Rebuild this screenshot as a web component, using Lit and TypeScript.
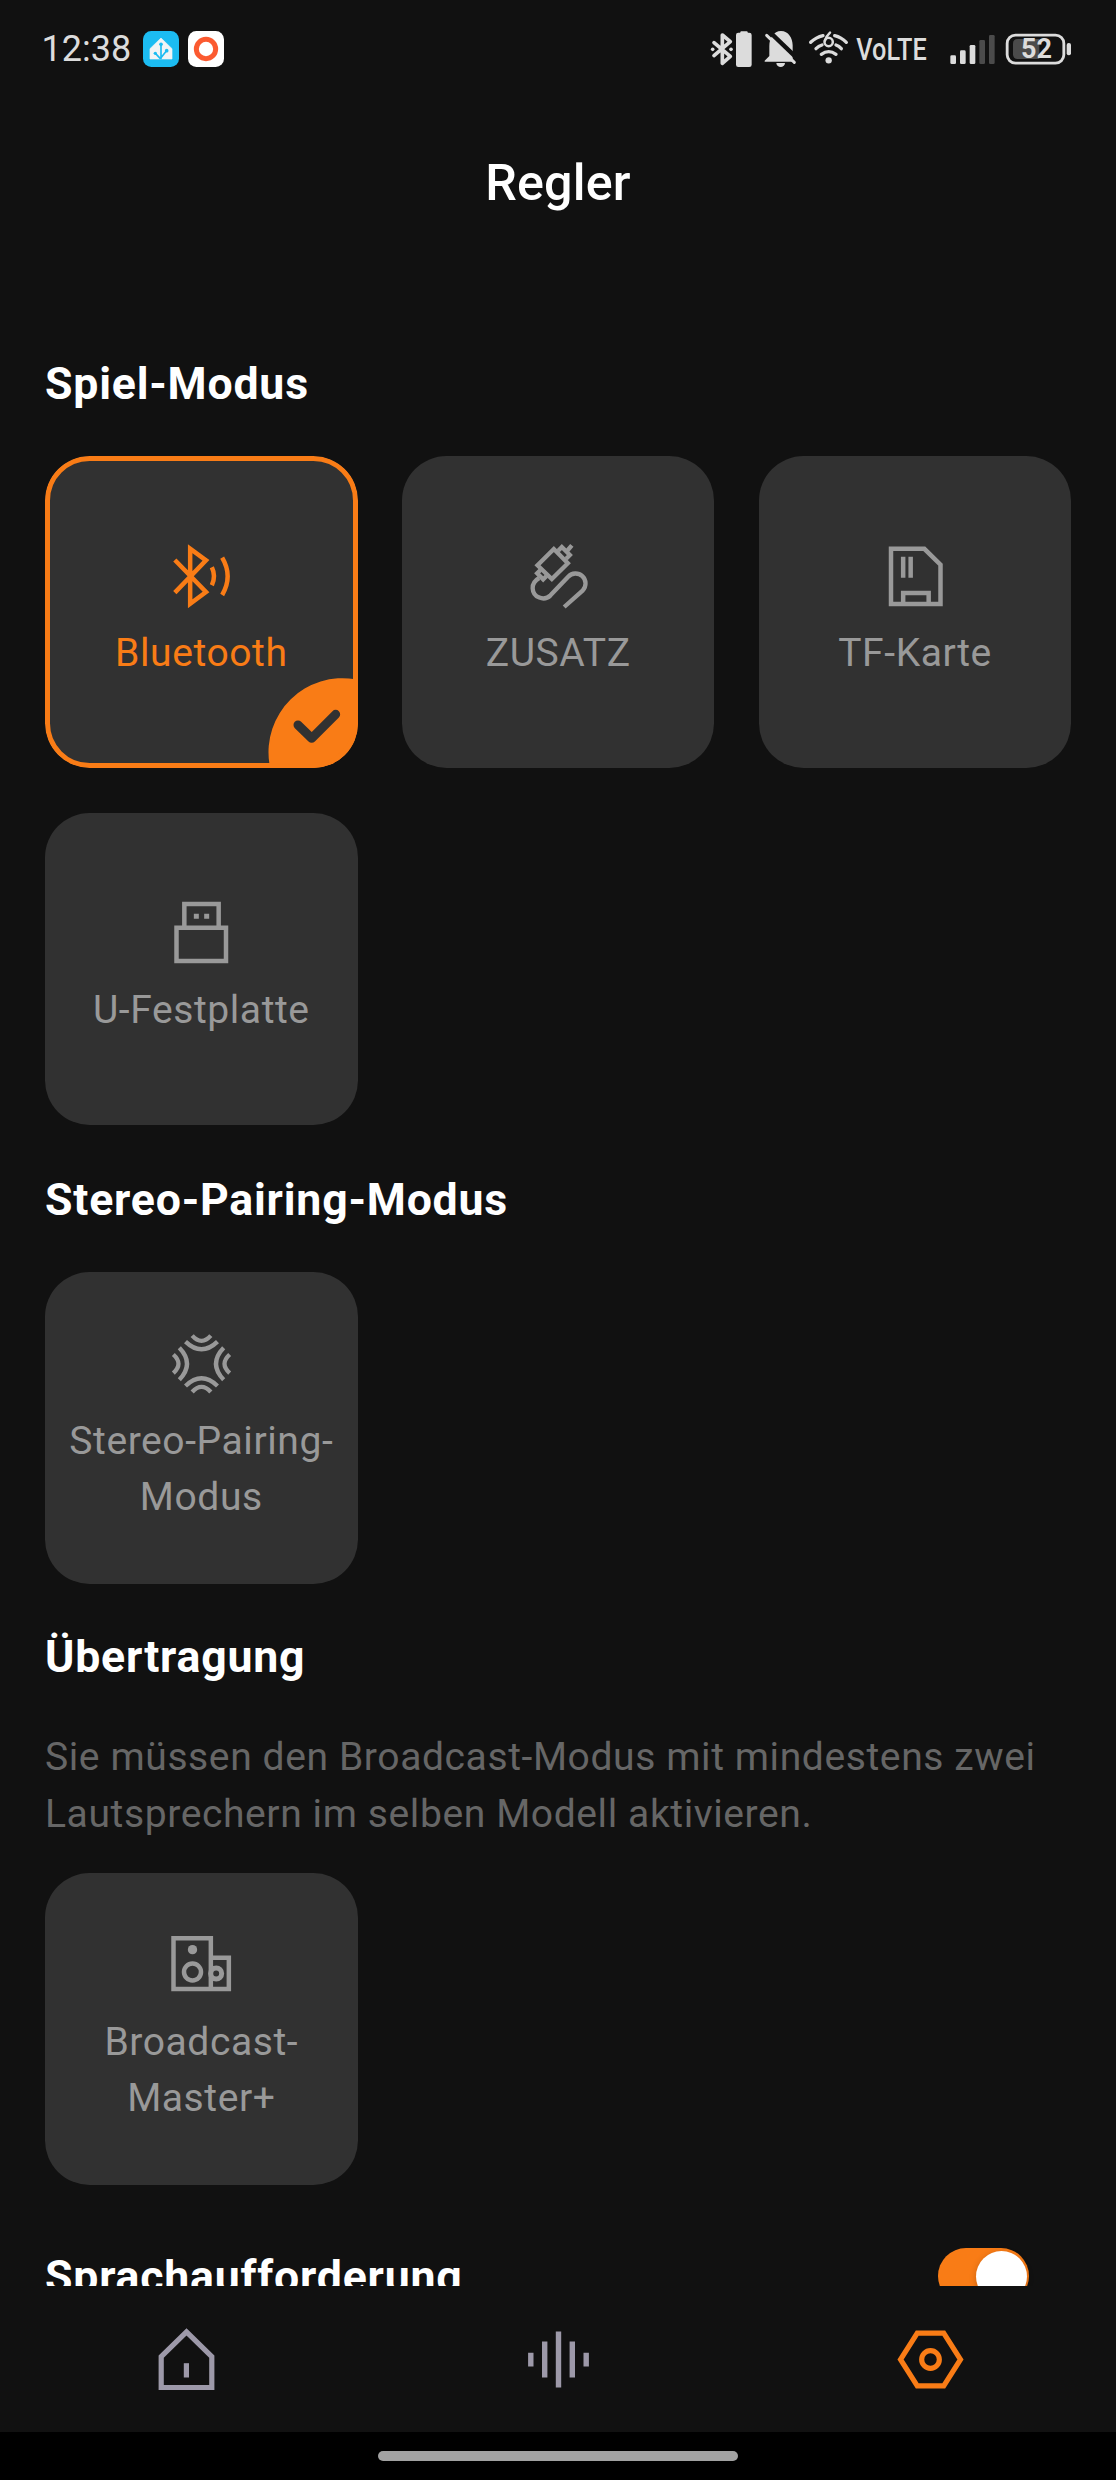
import { LitElement, html, css, svg, nothing } from "lit";
import { customElement, property } from "lit/decorators.js";
import { classMap } from "lit/directives/class-map.js";

const statusIcons = {
  bluetooth: svg`<svg width="48.33" height="42" viewBox="90 54 145 126">
    <path d="M102 98 L151 139 L127 160 V75 L151 95 L102 137" fill="none" stroke="#dcdcdc" stroke-width="11" stroke-linejoin="round" stroke-linecap="round"/>
    <circle cx="98" cy="118" r="5.5" fill="#dcdcdc"/><circle cx="153" cy="118" r="5.5" fill="#dcdcdc"/>
    <rect x="168" y="68" width="47" height="103" rx="7" fill="#dcdcdc"/><rect x="181" y="64" width="22" height="10" rx="3" fill="#dcdcdc"/></svg>`,
  bell: svg`<svg width="44" height="42" viewBox="235 54 132 126">
    <path d="M255 155 V152 L269 138 V108 C269 84 282 63 304 63 C326 63 339 84 339 106 V155 Z" fill="#dcdcdc"/>
    <path d="M262 58 L362 154" stroke="#111" stroke-width="13"/>
    <path d="M261 76 L344 157" stroke="#dcdcdc" stroke-width="9" stroke-linecap="round"/>
    <path d="M290 159 H316 A13 12 0 0 1 290 159" fill="#dcdcdc"/></svg>`,
  wifi: svg`<svg width="49.67" height="42" viewBox="367 54 149 126">
    <g fill="none" stroke="#dcdcdc" stroke-width="10" stroke-linecap="round">
    <path d="M393 97 Q409 82 430 77"/><path d="M465 77 Q485 82 500 97"/>
    <path d="M409 116 Q417 108 427 105"/><path d="M469 105 Q478 108 485 116"/>
    <path d="M425 133 Q447 117 469 133"/></g>
    <circle cx="447" cy="96" r="12.5" fill="none" stroke="#dcdcdc" stroke-width="7.5"/>
    <path d="M436 92 Q440 78 451 68" fill="none" stroke="#dcdcdc" stroke-width="7.5" stroke-linecap="round"/>
    <circle cx="447" cy="151" r="9.5" fill="#dcdcdc"/></svg>`,
  volte: svg`<svg class="spill" width="86" height="42" viewBox="516 54 258 126">
    <text x="529" y="149.5" textLength="211" lengthAdjust="spacingAndGlyphs" font-family="Roboto, sans-serif" font-size="92" font-weight="500" fill="#dcdcdc">VoLTE</text></svg>`,
  signal: svg`<svg width="62" height="42" viewBox="774 54 186 126">
    <g fill="#dcdcdc"><rect x="811" y="136" width="17" height="26" rx="4"/><rect x="840" y="121" width="17" height="41" rx="4"/><rect x="869" y="105" width="17" height="57" rx="4"/></g>
    <g fill="#4b4b4b"><rect x="898" y="90" width="17" height="72" rx="4"/><rect x="927" y="75" width="17" height="87" rx="4"/></g></svg>`,
  battery: svg`<svg class="spill" width="72" height="42" viewBox="960 54 216 126">
    <rect x="981.5" y="75.5" width="170" height="84" rx="25" fill="none" stroke="#dcdcdc" stroke-width="8.5"/>
    <path d="M1013 87 H1078 V147 H1013 Q999 147 999 133 V101 Q999 87 1013 87Z" fill="#4b4b4b"/>
    <rect x="1160" y="99" width="13" height="37" rx="6" fill="#dcdcdc"/>
    <text x="1069.5" y="144.5" text-anchor="middle" font-family="Roboto, sans-serif" font-size="81" font-weight="700" fill="#dcdcdc">52</text></svg>`,
};

const appIcons = {
  home: svg`<svg width="36" height="36" viewBox="429 93 108 108">
    <rect x="429" y="93" width="108" height="108" rx="25" fill="#1cbcf2"/>
    <path d="M483 114 L516 146 V177 H450 V146 Z" fill="#f2f4f5" stroke="#f2f4f5" stroke-width="2" stroke-linejoin="round"/>
    <path d="M483 178 V134 M483 173 L499 153 M481 176 L467 161" stroke="#1cbcf2" stroke-width="5" fill="none"/>
    <g fill="#1cbcf2"><circle cx="483" cy="133" r="5.5"/><circle cx="500" cy="152" r="5.5"/><circle cx="466" cy="160" r="5"/></g></svg>`,
  ring: svg`<svg width="36" height="36" viewBox="564 93 108 108">
    <rect x="564" y="93" width="108" height="108" rx="25" fill="#fff"/>
    <circle cx="618" cy="147" r="29" fill="none" stroke="#fb5a30" stroke-width="15"/></svg>`,
};

const modeIcons = {
  bluetooth: svg`<svg width="67" height="67" viewBox="413.5 310 201 201" fill="none" stroke="currentColor" stroke-width="13.5" stroke-miterlimit="8">
    <path d="M434 361 L527.5 457 L480 492.5 V327 L527.5 362 L434 459"/>
    <path d="M545 383 Q558 410 545 437"/><path d="M576 354 Q609 410 576 466"/></svg>`,
  aux: svg`<svg width="67" height="67" viewBox="403.5 310 201 201" fill="none" stroke="currentColor" stroke-width="13">
    <path d="M441 377 L490 328 L532 371 L484 418 Z"/>
    <path d="M503 333 L514 322 L538 346 L527 357 M527 337 L544 317"/>
    <path d="M450 391 L440 401 L458 419 L468 409"/>
    <path d="M446 415 C432 423 426 434 426.5 446 A31.5 31.5 0 0 0 480 467 L533 411 A30 30 0 0 1 577 452 L521 502"/></svg>`,
  card: svg`<svg width="67" height="67" viewBox="395 310 201 201" fill="none" stroke="currentColor" stroke-width="13.5">
    <path d="M422 327.5 H522 L570.5 375 V493 H422 Z"/>
    <path d="M458.5 351 V414 M481 351 V414 M458.5 493 V460 H535 V493"/></svg>`,
  usb: svg`<svg width="67" height="67" viewBox="413.5 301 201 201" fill="none" stroke="currentColor" stroke-width="13.5">
    <path d="M439 384.5 H587.5 V484 H439 Z M462.5 384.5 V313 H565.5 V384.5"/>
    <path d="M491 349.5 H506 M522 349.5 H537" stroke-width="15"/></svg>`,
  stereo: svg`<svg width="67" height="67" viewBox="413.5 514 201 201" fill="none" stroke="currentColor" stroke-width="13">
    ${[0, 90, 180, 270].map(
      (angle) => svg`<g transform="rotate(${angle} 514 612.5)"><path d="M486 528 Q514 559 542 528"/><path d="M466 546 Q514 592 562 546"/></g>`
    )}</svg>`,
  broadcast: svg`<svg width="67" height="67" viewBox="413.5 218 201 201" fill="none" stroke="currentColor" stroke-width="13.5">
    <path d="M430 237 H542 V389 H430 Z M542 295.5 H596 V389 H542"/>
    <circle cx="487" cy="271" r="14" fill="currentColor" stroke="none"/>
    <circle cx="487" cy="338" r="25.5"/><circle cx="558" cy="342.5" r="16.5" stroke-width="15"/></svg>`,
};

const navIcons = [
  svg`<svg width="67" height="67" viewBox="152.5 2325.5 67 67" fill="none" stroke="currentColor" stroke-width="5.2">
    <path d="M186 2331.3 L211.3 2356.2 V2387 H160.7 V2356.2 Z"/><path d="M185.9 2362.7 V2377"/></svg>`,
  svg`<svg width="67" height="67" viewBox="524.5 2325.5 67 67" fill="none" stroke="currentColor" stroke-width="5.4">
    <path d="M530.3 2352.2 V2366 M544.2 2341 V2377 M558 2331 V2387 M571.8 2341 V2377 M585.7 2352.2 V2366"/></svg>`,
  svg`<svg width="67" height="67" viewBox="289.5 316.5 201 201" fill="none" stroke="currentColor" stroke-width="15.5">
    <path d="M350.3 338 H429.7 L480 417 L429.7 496 H350.3 L300 417 Z"/><circle cx="390" cy="417" r="26.5"/></svg>`,
];

@customElement("mode-card")
class ModeCard extends LitElement {
  @property() label = "";
  @property({ type: Boolean }) selected = false;
  @property({ attribute: false }) icon: unknown = nothing;

  static styles = css`
    :host { display: block; }
    .card {
      box-sizing: border-box; position: relative; overflow: hidden;
      width: 312.6px; height: 312.48px; border-radius: 44.64px;
      background: #313131; color: #999;
      display: flex; flex-direction: column; align-items: center; justify-content: center; gap: 15.4px;
      padding: 0 12px;
    }
    .on { color: #f97c16; }
    .on::after {
      content: ""; position: absolute; inset: 0; border: 5px solid #f97c16; border-radius: inherit;
    }
    svg { display: block; flex: none; }
    .label { font-size: 39.06px; line-height: 56px; letter-spacing: 0.57px; text-align: center; }
    .badge { position: absolute; right: 0; bottom: 0; }
  `;

  render() {
    return html`<div class=${classMap({ card: true, on: this.selected })}>
      ${this.icon}
      <div class="label">${this.label}</div>
      ${this.selected
        ? svg`<svg class="badge" width="90" height="90" viewBox="713 715 270 270">
            <path d="M717 985 V971 A222 222 0 0 1 975 719 H983 V985 Z" fill="#f97c16"/>
            <path d="M803 856 L844 896 L916 824" fill="none" stroke="#313131" stroke-width="27" stroke-linecap="round" stroke-linejoin="round"/></svg>`
        : nothing}
    </div>`;
  }
}

@customElement("app-root")
class AppRoot extends LitElement {
  static styles = css`
    :host {
      display: flex; flex-direction: column; width: 1116px; height: 2480px; overflow: hidden;
      background: #111; color: #fff; font-family: Roboto, "Liberation Sans", sans-serif;
    }
    svg { display: block; flex: none; }
    .spill { overflow: visible; }
    .status {
      flex: none; height: 98px; box-sizing: border-box; padding: 0 44px 0 41.5px;
      display: flex; align-items: center; justify-content: space-between; color: #dcdcdc;
    }
    .left { display: flex; align-items: center; gap: 9px; }
    .time { font-size: 36px; line-height: 42px; width: 92.5px; white-space: nowrap; }
    .icons { display: flex; }
    .title {
      flex: none; height: 168px; display: flex; align-items: center; justify-content: center;
      font-size: 50.22px; font-weight: 500; margin: 0; letter-spacing: 0.2px;
    }
    .content { flex: 1; min-height: 0; overflow: hidden; padding: 84.7px 0 0 45px; }
    h2 { margin: 0; font-size: 44.64px; line-height: 67px; font-weight: 700; letter-spacing: 0.79px; }
    .grid {
      display: grid; grid-template-columns: repeat(3, 312.6px); gap: 44.5px 44.3px;
      margin: 38.3px 0 41.2px;
    }
    .pairing { margin-bottom: 40px; }
    .note {
      margin: 37.5px 0 0; width: 1040px; color: #666;
      font-size: 39.06px; line-height: 56.8px; letter-spacing: 0.59px;
    }
    .tight { margin-top: 30.4px; margin-bottom: 59px; }
    .row { display: flex; justify-content: space-between; padding-right: 86.7px; }
    .toggle {
      width: 91.3px; height: 55.8px; border-radius: 28px; background: #f97c16; margin-top: 4px;
      box-sizing: border-box; padding: 2.5px; display: flex; justify-content: flex-end;
    }
    .thumb { width: 51px; height: 51px; border-radius: 50%; background: #fff; box-shadow: 0 2px 7px #0003; }
    .nav {
      flex: none; height: 146px; display: grid; grid-template-columns: repeat(3, 1fr);
      align-items: center; justify-items: center; color: #9d99a9;
    }
    .active { color: #f97c16; }
    .gesture { flex: none; height: 48px; background: #000; display: flex; justify-content: center; align-items: center; }
    .pill { width: 360px; height: 9.5px; border-radius: 5px; background: #a2a2a2; }
  `;

  render() {
    return html`
      <div class="status">
        <div class="left"><span class="time">12:38</span>${appIcons.home}${appIcons.ring}</div>
        <div class="icons">${statusIcons.bluetooth}${statusIcons.bell}${statusIcons.wifi}${statusIcons.volte}${statusIcons.signal}${statusIcons.battery}</div>
      </div>
      <h1 class="title">Regler</h1>
      <div class="content">
        <h2>Spiel-Modus</h2>
        <div class="grid">
          <mode-card label="Bluetooth" selected .icon=${modeIcons.bluetooth}></mode-card>
          <mode-card label="ZUSATZ" .icon=${modeIcons.aux}></mode-card>
          <mode-card label="TF-Karte" .icon=${modeIcons.card}></mode-card>
          <mode-card label="U-Festplatte" .icon=${modeIcons.usb}></mode-card>
        </div>
        <h2>Stereo-Pairing-Modus</h2>
        <div class="grid pairing"><mode-card label="Stereo-Pairing-Modus" .icon=${modeIcons.stereo}></mode-card></div>
        <h2>Übertragung</h2>
        <p class="note">Sie müssen den Broadcast-Modus mit mindestens zwei Lautsprechern im selben Modell aktivieren.</p>
        <div class="grid tight"><mode-card label="Broadcast-Master+" .icon=${modeIcons.broadcast}></mode-card></div>
        <div class="row"><h2>Sprachaufforderung</h2><div class="toggle"><div class="thumb"></div></div></div>
      </div>
      <nav class="nav">
        <span>${navIcons[0]}</span><span>${navIcons[1]}</span><span class="active">${navIcons[2]}</span>
      </nav>
      <div class="gesture"><div class="pill"></div></div>
    `;
  }
}
